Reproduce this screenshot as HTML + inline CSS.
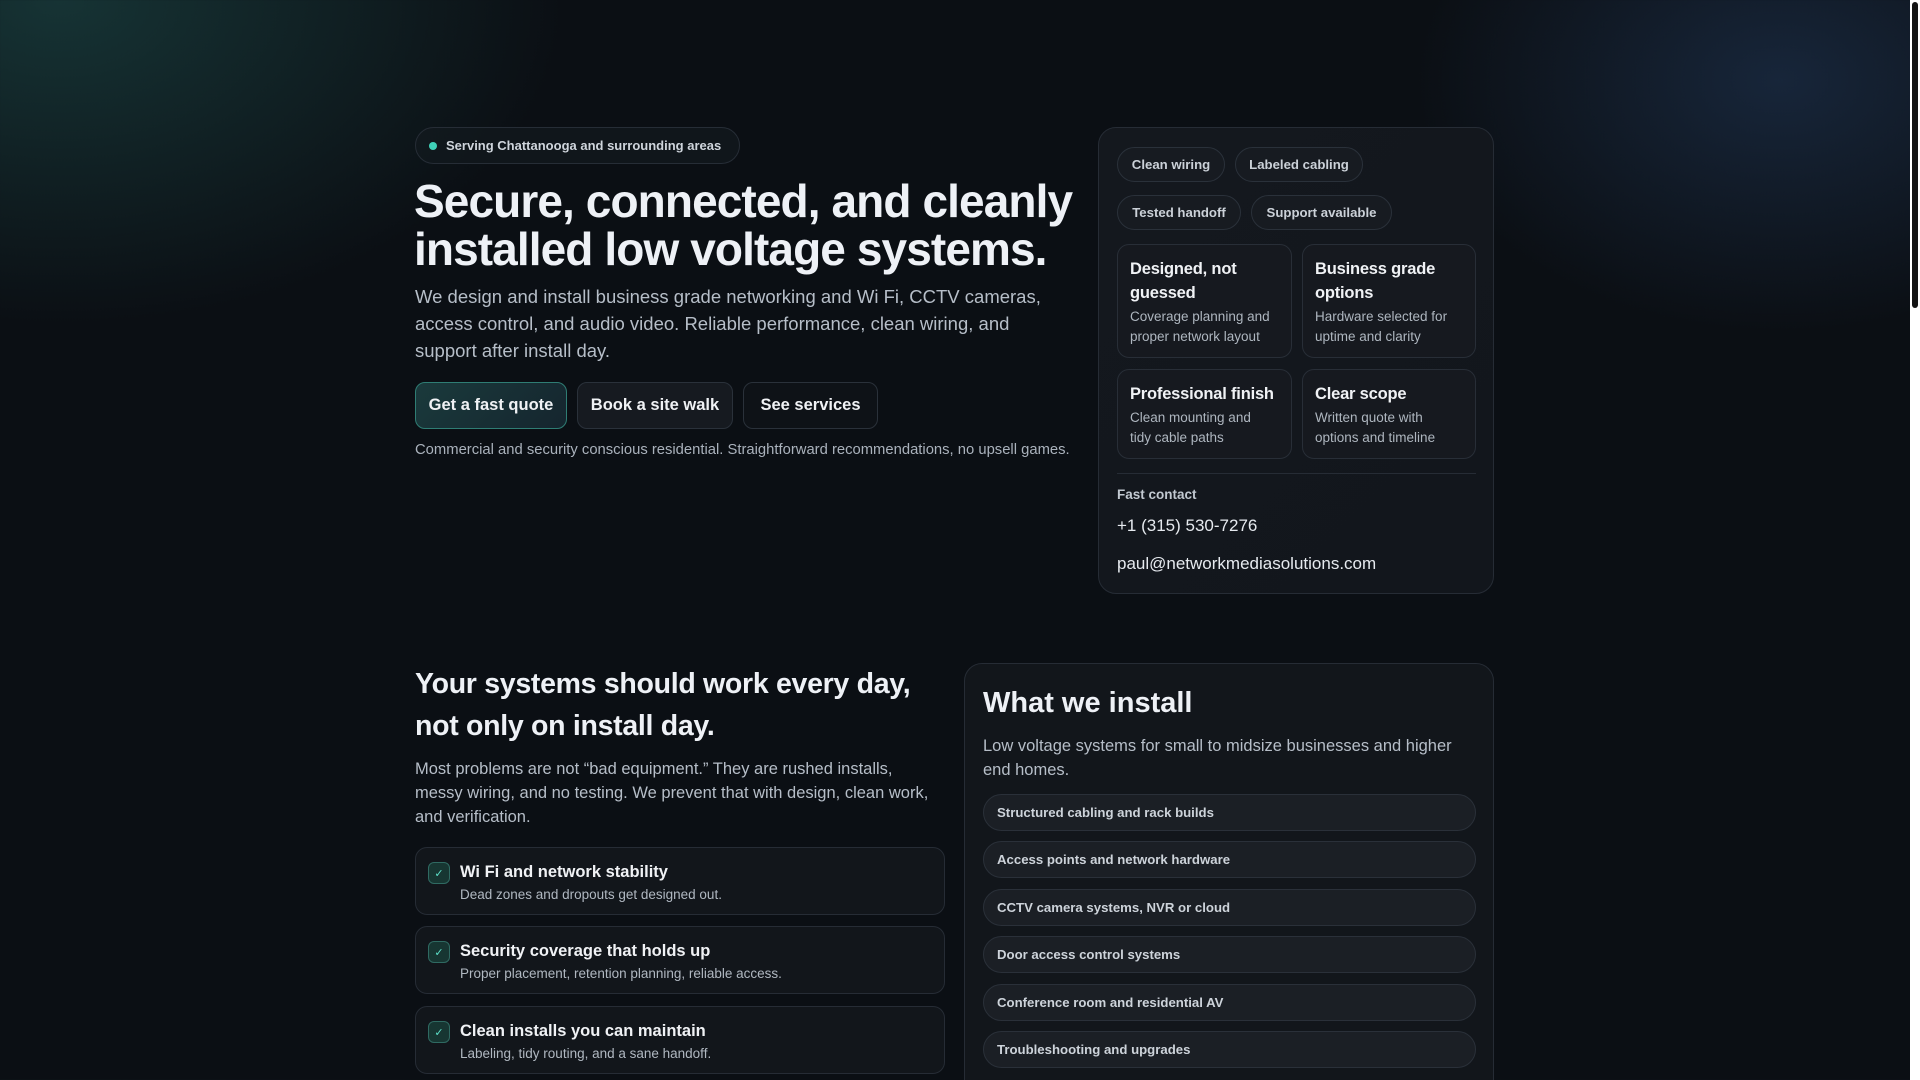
<!DOCTYPE html>
<html><head><meta charset="utf-8"><style>
*{box-sizing:border-box;margin:0;padding:0}
html,body{width:1920px;height:1080px;overflow:hidden}
body{font-family:"Liberation Sans",sans-serif;color:#e8ecf2;position:relative;
background:
radial-gradient(ellipse 700px 450px at 60px 0px,rgba(40,110,105,.38),transparent 72%),
radial-gradient(ellipse 520px 360px at 1780px 80px,rgba(35,60,95,.5),transparent 70%),
#0b0f14;}
.sb{position:absolute;right:0;top:0;width:10px;height:1080px;background:#fff}
.sb i{position:absolute;left:2px;top:2px;width:6px;height:306px;background:#141414;border-radius:3px}
.abs{position:absolute}
.badge{left:415px;top:127px;height:37px;width:325px;border:1px solid #262d36;border-radius:19px;background:rgba(20,26,32,.6);font-size:13px;font-weight:bold;color:#cfd5dc;display:flex;align-items:center;padding-left:13px}
.badge b{width:8px;height:8px;border-radius:50%;background:#3fd1b8;margin-right:9px}
h1{left:414px;top:177px;font-size:46px;line-height:48px;font-weight:bold;letter-spacing:-.9px;color:#eef1f6;white-space:nowrap}
.lead{left:415px;top:283px;width:650px;font-size:18.5px;line-height:27px;color:#b6bec8}
.btn{top:382px;height:47px;border-radius:10px;border:1px solid #2a313a;background:#161a20;font-size:16.5px;font-weight:bold;color:#f0f2f5;display:flex;align-items:center;justify-content:center}
.note{left:415px;top:442px;font-size:14.8px;color:#aab2bc;white-space:nowrap}
.card{border:1px solid #262c35;border-radius:18px;background:linear-gradient(135deg,#14181e,#12161c)}
.chip{height:35px;border:1px solid #2a313a;border-radius:18px;background:#171b21;font-size:13.2px;font-weight:bold;color:#cbd1d8;display:flex;align-items:center;justify-content:center}
.mini{border:1px solid #282e37;border-radius:12px;background:#16191f;padding:12px 12px}
.mini h4{font-size:16.5px;line-height:24px;color:#f0f2f5;letter-spacing:-.2px}
.mini p{font-size:13.5px;line-height:20px;color:#aeb6bf;margin-top:2px;padding-right:8px}
h2{font-weight:bold;color:#eef1f6}
.item{left:415px;width:530px;height:68px;border:1px solid #262c35;border-radius:12px;background:#12161b}
.item .ck{position:absolute;left:12px;top:14px;width:22px;height:22px;border:1px solid #2f6a62;border-radius:6px;background:#173632;color:#5de0c8;font-size:11px;display:flex;align-items:center;justify-content:center}
.item h5{position:absolute;left:44px;top:15px;font-size:16.5px;color:#f0f2f5}
.item p{position:absolute;left:44px;top:39px;font-size:13.5px;color:#b0b8c1}
.pill{left:983px;width:493px;height:37px;border:1px solid #2a3039;border-radius:19px;background:#1b1f25;font-size:13.2px;font-weight:bold;color:#cdd3da;padding-left:13px;display:flex;align-items:center}
</style></head><body>
<div class="abs badge"><b></b>Serving Chattanooga and surrounding areas</div>
<h1 class="abs">Secure, connected, and cleanly<br>installed low voltage systems.</h1>
<p class="abs lead">We design and install business grade networking and Wi Fi, CCTV cameras, access control, and audio video. Reliable performance, clean wiring, and support after install day.</p>
<div class="abs btn" style="left:415px;width:152px;background:linear-gradient(135deg,#1a3a3c,#15252e);border-color:#2f7d74">Get a fast quote</div>
<div class="abs btn" style="left:577px;width:156px">Book a site walk</div>
<div class="abs btn" style="left:743px;width:135px;background:#0e1217">See services</div>
<p class="abs note">Commercial and security conscious residential. Straightforward recommendations, no upsell games.</p>

<div class="abs card" style="left:1098px;top:127px;width:396px;height:467px"></div>
<div class="abs chip" style="left:1117px;top:147px;width:108px">Clean wiring</div>
<div class="abs chip" style="left:1235px;top:147px;width:128px">Labeled cabling</div>
<div class="abs chip" style="left:1117px;top:195px;width:124px">Tested handoff</div>
<div class="abs chip" style="left:1251px;top:195px;width:141px">Support available</div>
<div class="abs mini" style="left:1117px;top:244px;width:175px;height:114px"><h4>Designed, not guessed</h4><p>Coverage planning and proper network layout</p></div>
<div class="abs mini" style="left:1302px;top:244px;width:174px;height:114px"><h4>Business grade options</h4><p>Hardware selected for uptime and clarity</p></div>
<div class="abs mini" style="left:1117px;top:369px;width:175px;height:90px"><h4 style="white-space:nowrap">Professional finish</h4><p>Clean mounting and tidy cable paths</p></div>
<div class="abs mini" style="left:1302px;top:369px;width:174px;height:90px"><h4>Clear scope</h4><p>Written quote with options and timeline</p></div>
<div class="abs" style="left:1117px;top:473px;width:359px;height:1px;background:#262c35"></div>
<div class="abs" style="left:1117px;top:487px;font-size:13.5px;font-weight:bold;color:#c2c9d1">Fast contact</div>
<div class="abs" style="left:1117px;top:516px;font-size:17px;color:#e6eaef">+1 (315) 530-7276</div>
<div class="abs" style="left:1117px;top:554px;font-size:17px;color:#e6eaef">paul@networkmediasolutions.com</div>

<h2 class="abs" style="left:415px;top:663px;font-size:28.5px;line-height:42px;letter-spacing:-.3px">Your systems should work every day,<br>not only on install day.</h2>
<p class="abs" style="left:415px;top:757px;width:522px;font-size:16.5px;line-height:24px;color:#b6bec8">Most problems are not “bad equipment.” They are rushed installs, messy wiring, and no testing. We prevent that with design, clean work, and verification.</p>
<div class="abs item" style="top:847px"><div class="ck">✓</div><h5>Wi Fi and network stability</h5><p>Dead zones and dropouts get designed out.</p></div>
<div class="abs item" style="top:926px"><div class="ck">✓</div><h5>Security coverage that holds up</h5><p>Proper placement, retention planning, reliable access.</p></div>
<div class="abs item" style="top:1006px"><div class="ck">✓</div><h5>Clean installs you can maintain</h5><p>Labeling, tidy routing, and a sane handoff.</p></div>

<div class="abs card" style="left:964px;top:663px;width:530px;height:460px;background:#12161b"></div>
<h2 class="abs" style="left:983px;top:687px;font-size:29px">What we install</h2>
<p class="abs" style="left:983px;top:734px;width:500px;font-size:16.5px;line-height:24px;color:#b6bec8">Low voltage systems for small to midsize businesses and higher end homes.</p>
<div class="abs pill" style="top:794px">Structured cabling and rack builds</div>
<div class="abs pill" style="top:841px">Access points and network hardware</div>
<div class="abs pill" style="top:889px">CCTV camera systems, NVR or cloud</div>
<div class="abs pill" style="top:936px">Door access control systems</div>
<div class="abs pill" style="top:984px">Conference room and residential AV</div>
<div class="abs pill" style="top:1031px">Troubleshooting and upgrades</div>
<div class="sb"><i></i></div>
</body></html>
